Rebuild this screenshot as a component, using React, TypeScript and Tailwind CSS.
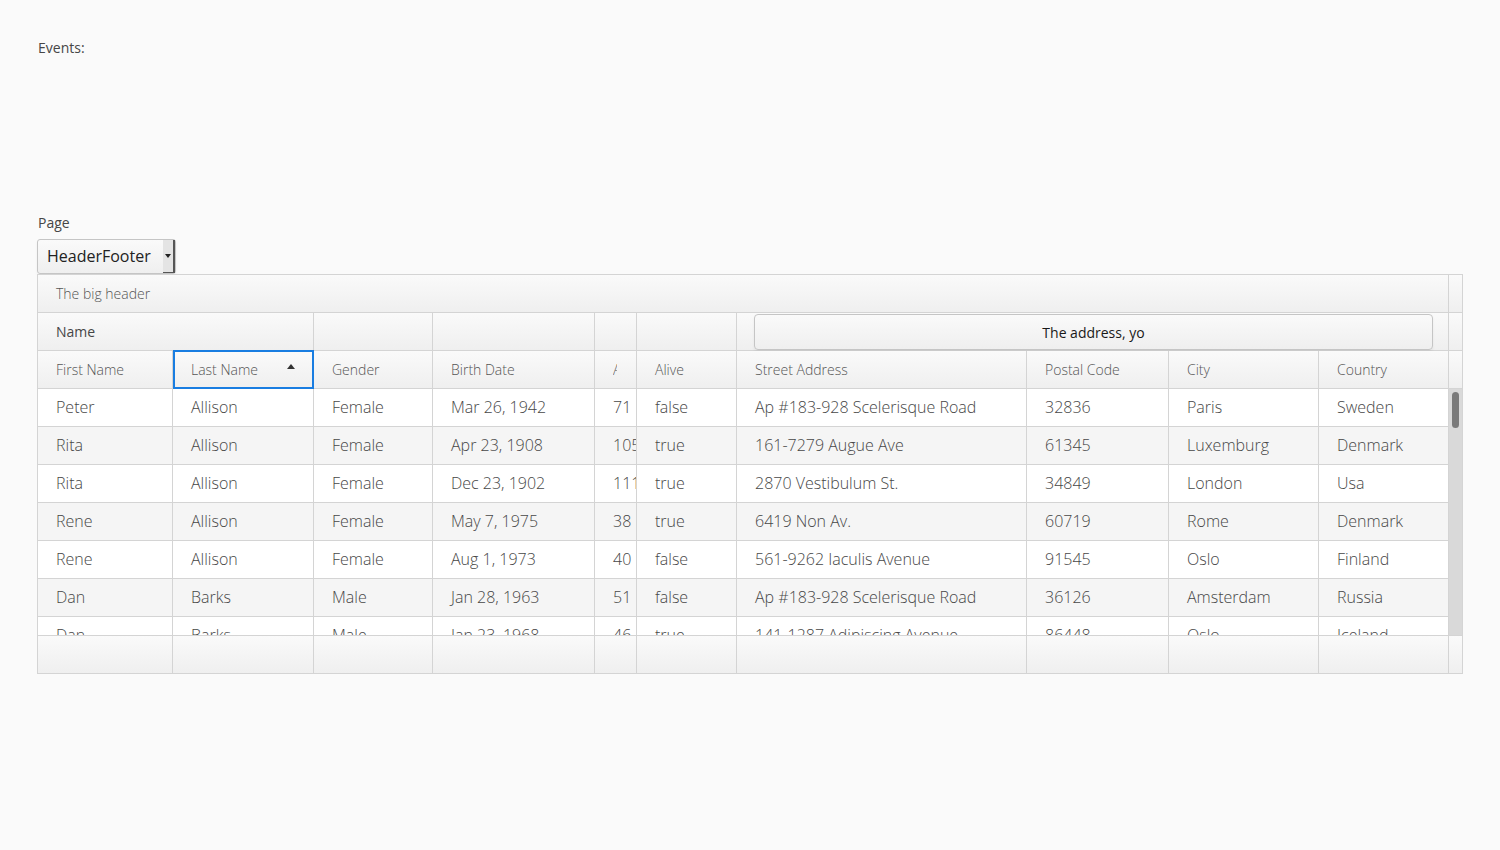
const COLS = [135, 141, 119, 162, 42, 100, 290, 142, 150, 130]
const HEADERS = ["First Name", "Last Name", "Gender", "Birth Date", "Age", "Alive", "Street Address", "Postal Code", "City", "Country"]

const ROWS = [
    ["Peter", "Allison", "Female", "Mar 26, 1942", "71", "false", "Ap #183-928 Scelerisque Road", "32836", "Paris", "Sweden"],
    ["Rita", "Allison", "Female", "Apr 23, 1908", "105", "true", "161-7279 Augue Ave", "61345", "Luxemburg", "Denmark"],
    ["Rita", "Allison", "Female", "Dec 23, 1902", "111", "true", "2870 Vestibulum St.", "34849", "London", "Usa"],
    ["Rene", "Allison", "Female", "May 7, 1975", "38", "true", "6419 Non Av.", "60719", "Rome", "Denmark"],
    ["Rene", "Allison", "Female", "Aug 1, 1973", "40", "false", "561-9262 Iaculis Avenue", "91545", "Oslo", "Finland"],
    ["Dan", "Barks", "Male", "Jan 28, 1963", "51", "false", "Ap #183-928 Scelerisque Road", "36126", "Amsterdam", "Russia"],
    ["Dan", "Barks", "Male", "Jan 23, 1968", "46", "true", "141-1287 Adipiscing Avenue", "86448", "Oslo", "Iceland"],
]

const HEAD_BG = "bg-gradient-to-b from-[#fafafa] to-[#efefef]"

function Corner() {
    return <div className={`w-[13px] h-[38px] shrink-0 ${HEAD_BG} border-b border-[#d4d4d4]`} />
}

export default function App() {
    return (
        <div className="min-h-[850px] w-full bg-[#fafafa] font-['Open_Sans',sans-serif] text-[#464646]">
            <div className="px-[37px] pt-[38px]">
                <div className="pl-px text-[14px] leading-[20px]">Events:</div>

                <div className="mt-[155px] pl-px text-[14px] leading-[20px]">Page</div>

                {/* Native select */}
                <div className="mt-[6px] flex h-[35px] w-[139px] items-stretch rounded-[3px] border border-[#c5c5c5] bg-gradient-to-b from-[#fafafa] to-[#efefef] shadow-[0_2px_3px_rgba(0,0,0,0.05)]">
                    <div className="flex flex-1 items-center pb-px pl-[9px] text-[16px] text-[#222]">HeaderFooter</div>
                    <div className="flex w-[12px] items-center justify-center border-r-2 border-b border-[#555] bg-[#e4e4e4]">
                        <svg width="6" height="4" viewBox="0 0 6 4">
                            <path d="M0 0 L6 0 L3 4 Z" fill="#222" />
                        </svg>
                    </div>
                </div>

                {/* Grid */}
                <div className="flex h-[400px] w-[1426px] flex-col border border-[#d4d4d4] bg-white">
                    {/* Big header */}
                    <div className="flex">
                        <div className={`flex h-[38px] w-[1411px] items-center border-b border-r border-[#d4d4d4] pl-[18px] text-[14px] font-light text-[#555] ${HEAD_BG}`}>
                            The big header
                        </div>
                        <Corner />
                    </div>

                    {/* Grouped header */}
                    <div className="flex">
                        <div className={`flex h-[38px] w-[276px] items-center border-b border-r border-[#d4d4d4] pl-[18px] text-[14px] ${HEAD_BG}`}>
                            Name
                        </div>
                        {[119, 162, 42, 100].map((w, i) => (
                            <div key={i} className={`h-[38px] border-b border-r border-[#d4d4d4] ${HEAD_BG}`} style={{ width: w }} />
                        ))}
                        <div className={`flex h-[38px] w-[712px] items-start border-b border-r border-[#d4d4d4] pl-[17px] pr-[15px] pt-px ${HEAD_BG}`}>
                            <button className="flex h-[36px] w-full items-center justify-center rounded-[4px] border border-[#c5c5c5] bg-gradient-to-b from-[#fafafa] to-[#efefef] text-[14px] text-[#191919] shadow-[0_2px_3px_rgba(0,0,0,0.05)]">
                                The address, yo
                            </button>
                        </div>
                        <Corner />
                    </div>

                    {/* Column header */}
                    <div className="flex">
                        {HEADERS.map((h, i) => (
                            <div
                                key={h}
                                className={`relative flex h-[38px] shrink-0 items-center border-b border-r border-[#d4d4d4] pl-[18px] text-[14px] font-light text-[#555] ${HEAD_BG}`}
                                style={{ width: COLS[i] }}
                            >
                                {i === 4 ? (
                                    <span className="block w-[4px] overflow-hidden whitespace-nowrap">{h}</span>
                                ) : (
                                    <span className="whitespace-nowrap">{h}</span>
                                )}
                                {i === 1 && (
                                    <>
                                        <svg className="absolute left-[114px] top-[13px]" width="8" height="5" viewBox="0 0 8 5">
                                            <path d="M0 5 L4 0 L8 5 Z" fill="#333" />
                                        </svg>
                                        <div className="absolute left-0 top-[-1px] right-[-1px] bottom-[-1px] border-2 border-[#197de1]" />
                                    </>
                                )}
                            </div>
                        ))}
                        <Corner />
                    </div>

                    {/* Body */}
                    <div className="flex h-[246px]">
                        <div className="h-[246px] w-[1411px] overflow-hidden">
                            {ROWS.map((r, ri) => (
                                <div key={ri} className={`flex ${ri % 2 === 1 ? "bg-[#f5f5f5]" : "bg-white"}`}>
                                    {r.map((c, ci) => (
                                        <div
                                            key={ci}
                                            className="flex h-[38px] shrink-0 items-center overflow-hidden whitespace-nowrap border-b border-r border-[#d4d4d4] pb-[2px] pl-[18px] text-[16px] font-light text-[#474747]"
                                            style={{ width: COLS[ci] }}
                                        >
                                            {c}
                                        </div>
                                    ))}
                                </div>
                            ))}
                        </div>
                        <div className="relative h-[246px] w-[13px] bg-[#d9d9d9]">
                            <div className="absolute left-[3px] top-[3px] h-[36px] w-[7px] rounded-[4px] bg-[#7a7a7a]" />
                        </div>
                    </div>

                    {/* Footer */}
                    <div className="flex border-t border-[#d4d4d4]">
                        {COLS.map((w, i) => (
                            <div key={i} className={`h-[37px] shrink-0 border-r border-[#d4d4d4] ${HEAD_BG}`} style={{ width: w }} />
                        ))}
                        <div className={`h-[37px] w-[13px] ${HEAD_BG}`} />
                    </div>
                </div>
            </div>
        </div>
    )
}
